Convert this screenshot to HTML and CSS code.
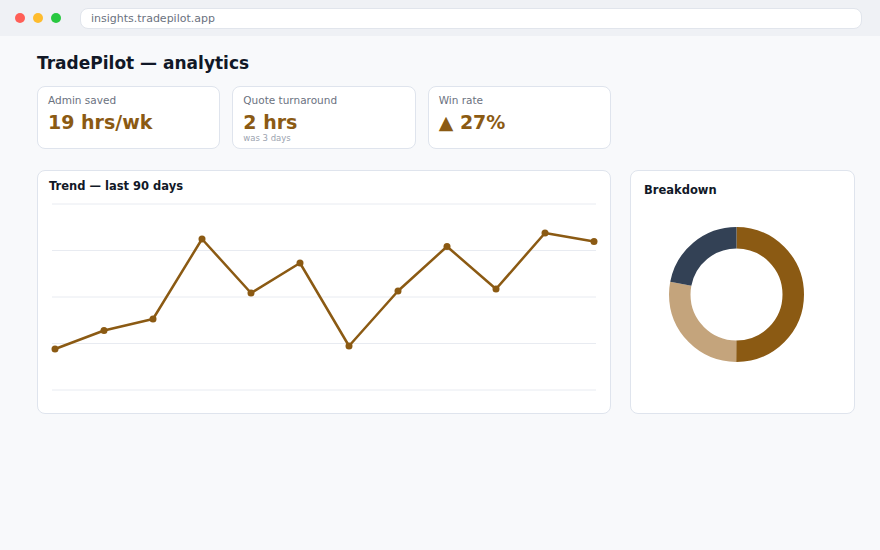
FILE: index.html
```html
<!DOCTYPE html>
<html lang="en">

<head>
  <meta charset="UTF-8">
  <meta name="viewport" content="width=device-width, initial-scale=1.0">
  <title>TradePilot — analytics</title>
  <link rel="stylesheet" href="styles.css">
</head>

<body>
  <div class="browser-bar">
    <span class="dot dot-red"></span>
    <span class="dot dot-yellow"></span>
    <span class="dot dot-green"></span>
    <div class="url">insights.tradepilot.app</div>
  </div>

  <div class="page">
    <h1>TradePilot — analytics</h1>

    <div class="layout">
      <div class="kpis">
        <div class="card kpi">
          <div class="kpi-label">Admin saved</div>
          <div class="kpi-value">19 hrs/wk</div>
        </div>
        <div class="card kpi">
          <div class="kpi-label">Quote turnaround</div>
          <div class="kpi-value">2 hrs</div>
          <div class="kpi-sub">was 3 days</div>
        </div>
        <div class="card kpi">
          <div class="kpi-label">Win rate</div>
          <div class="kpi-value">▲ 27%</div>
        </div>
      </div>

      <div class="card trend">
        <h2>Trend — last 90 days</h2>
        <svg class="chart" width="550" height="205" viewBox="0 0 550 205">
          <g stroke="#e8ebf1" stroke-width="1">
            <line x1="3" y1="8" x2="547" y2="8" />
            <line x1="3" y1="54.5" x2="547" y2="54.5" />
            <line x1="3" y1="101" x2="547" y2="101" />
            <line x1="3" y1="147.5" x2="547" y2="147.5" />
            <line x1="3" y1="194" x2="547" y2="194" />
          </g>
          <polyline fill="none" stroke="#8b5a13" stroke-width="2.5" stroke-linejoin="round"
            points="6,153 55,134.5 104,123 153,43 202,97 251,67 300,150 349,95 398,50.5 447,93 496,37 545,45.5" />
          <g fill="#8b5a13">
            <circle cx="6" cy="153" r="3.5" />
            <circle cx="55" cy="134.5" r="3.5" />
            <circle cx="104" cy="123" r="3.5" />
            <circle cx="153" cy="43" r="3.5" />
            <circle cx="202" cy="97" r="3.5" />
            <circle cx="251" cy="67" r="3.5" />
            <circle cx="300" cy="150" r="3.5" />
            <circle cx="349" cy="95" r="3.5" />
            <circle cx="398" cy="50.5" r="3.5" />
            <circle cx="447" cy="93" r="3.5" />
            <circle cx="496" cy="37" r="3.5" />
            <circle cx="545" cy="45.5" r="3.5" />
          </g>
        </svg>
      </div>

      <div class="card breakdown">
        <h2>Breakdown</h2>
        <svg class="donut" width="197" height="200" viewBox="0 0 197 200">
          <g fill="none" stroke-width="21.5" transform="rotate(-90 92.5 93.5)">
            <circle cx="92.5" cy="93.5" r="56.75" stroke="#8b5a13" stroke-dasharray="178.3 356.6" />
            <circle cx="92.5" cy="93.5" r="56.75" stroke="#c4a47c" stroke-dasharray="99.5 356.6" stroke-dashoffset="-178.3" />
            <circle cx="92.5" cy="93.5" r="56.75" stroke="#334155" stroke-dasharray="78.8 356.6" stroke-dashoffset="-277.8" />
          </g>
        </svg>
      </div>
    </div>
  </div>
</body>

</html>
```

FILE: styles.css
```css
body {
  margin: 0;
  padding: 0;
  font-family: "DejaVu Sans", sans-serif;
  background-color: #f8f9fb;
  color: #0f172a;
}

.browser-bar {
  height: 36px;
  display: flex;
  align-items: center;
  padding: 0 18px 0 15px;
  background: #eff1f5;
}

.dot {
  width: 10px;
  height: 10px;
  border-radius: 50%;
  margin-right: 8px;
}

.dot-red {
  background: #ff5f57;
}

.dot-yellow {
  background: #febc2e;
}

.dot-green {
  background: #28c840;
  margin-right: 19px;
}

.url {
  flex: 1;
  height: 19px;
  line-height: 19px;
  padding: 0 10px;
  background: #fff;
  border: 1px solid #e1e5ec;
  border-radius: 8px;
  font-size: 11px;
  color: #6b7280;
}

.page {
  padding: 17px 25px 0 37px;
}

h1 {
  margin: 0 0 13px;
  font-size: 17px;
  line-height: 20px;
  font-weight: bold;
  color: #111827;
}

.layout {
  display: grid;
  grid-template-columns: 574px 225px;
  column-gap: 19px;
  row-gap: 21px;
}

.card {
  background: #fff;
  border: 1px solid #dfe4ed;
  border-radius: 8px;
}

.kpis {
  grid-column: 1 / 2;
  display: grid;
  grid-template-columns: repeat(3, 1fr);
  gap: 12px;
}

.kpi {
  padding: 7px 10px 4px;
}

.kpi-label {
  font-size: 10.5px;
  line-height: 13px;
  color: #6b7280;
}

.kpi-value {
  margin-top: 4px;
  font-size: 19px;
  line-height: 22px;
  font-weight: bold;
  color: #8b5a13;
}

.kpi-sub {
  font-size: 8.5px;
  line-height: 11px;
  color: #9ca3af;
}

.card h2 {
  margin: 0;
  font-size: 11.5px;
  line-height: 13px;
  font-weight: bold;
  color: #111827;
}

.trend {
  grid-column: 1 / 2;
  padding: 9px 11px 11px;
}

.chart {
  display: block;
  margin-top: 3px;
}

.breakdown {
  grid-column: 2 / 3;
  padding: 13px 13px 12px;
}

.donut {
  display: block;
  margin-top: 4px;
}
```
